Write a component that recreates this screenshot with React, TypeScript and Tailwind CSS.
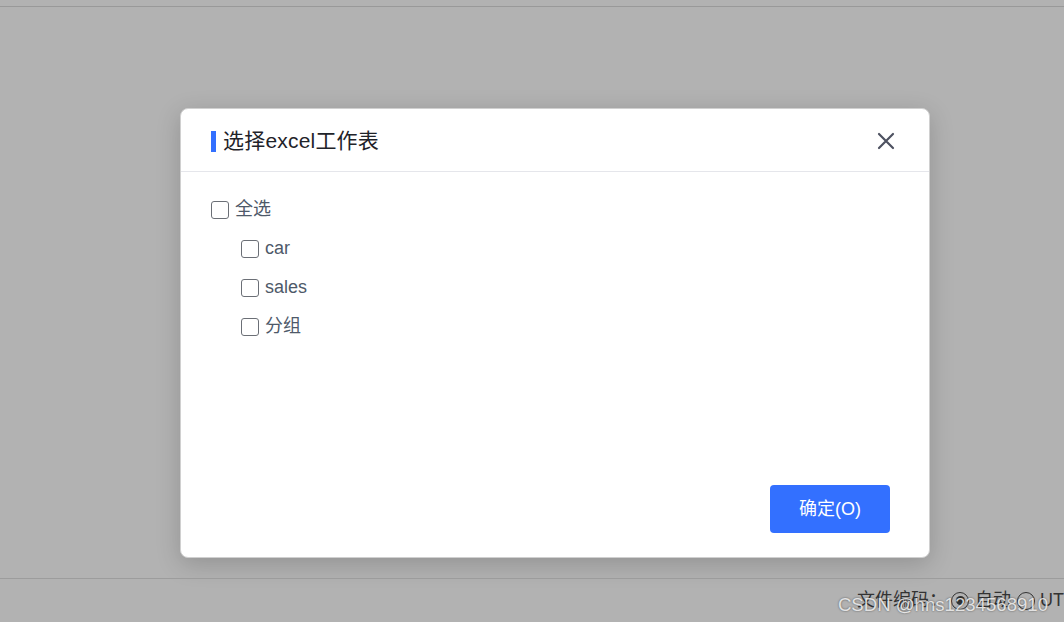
import { useState } from 'react';

const sheets = ['car', 'sales', '分组'];

function Box({ checked, onClick }: { checked: boolean; onClick: () => void }) {
  return (
    <span
      onClick={onClick}
      className={`w-[18px] h-[18px] rounded-[3px] border-[1.5px] shrink-0 flex items-center justify-center ${
        checked ? 'bg-[#3370ff] border-[#3370ff]' : 'bg-white border-[#6b6f76]'
      }`}
    >
      {checked && (
        <svg width="12" height="12" viewBox="0 0 12 12">
          <path d="M2.5 6.2l2.3 2.3 4.7-4.9" fill="none" stroke="#fff" strokeWidth="1.6" />
        </svg>
      )}
    </span>
  );
}

export default function App() {
  const [sel, setSel] = useState<string[]>([]);
  const all = sel.length === sheets.length;
  const toggle = (s: string) =>
    setSel((p) => (p.includes(s) ? p.filter((x) => x !== s) : [...p, s]));

  return (
    <div
      className="w-[1064px] h-[622px] bg-[#b2b2b2] flex flex-col overflow-hidden"
      style={{ fontFamily: '"Liberation Sans", "Noto Sans CJK SC", sans-serif' }}
    >
      <div className="h-[6px] shrink-0" />
      <div className="h-px bg-[#999] shrink-0" />
      <div className="flex-1 flex justify-center pt-[101px]">
        <div className="w-[750px] h-[450px] bg-white rounded-lg border border-[#d0d0d0] shadow-[0_6px_24px_rgba(0,0,0,0.18)] flex flex-col ml-[46px]">
          <div className="h-[63px] border-b border-[#e5e6eb] flex items-center pl-[30px] pr-[34px] pt-[2px]">
            <span className="w-[5px] h-[21px] bg-[#3370ff] mr-[7px]" />
            <span className="text-[21px] leading-[26px] tracking-[0.2px] text-[#1f2329] flex-1">选择excel工作表</span>
            <svg width="18" height="18" viewBox="0 0 18 18">
              <path d="M2 2L16 16M16 2L2 16" stroke="#4e5261" strokeWidth="2.2" strokeLinecap="round" />
            </svg>
          </div>
          <div className="flex-1 pl-[30px] pt-[18px] flex flex-col">
            <label className="flex items-center gap-[6px] h-[39px] text-[18px] text-[#4e5969]">
              <Box checked={all} onClick={() => setSel(all ? [] : [...sheets])} />
              全选
            </label>
            {sheets.map((s) => (
              <label key={s} className="flex items-center gap-[6px] h-[39px] pl-[30px] text-[18px] text-[#4e5969]">
                <Box checked={sel.includes(s)} onClick={() => toggle(s)} />
                {s}
              </label>
            ))}
          </div>
          <div className="flex justify-end pr-[39px] pb-[24px]">
            <button className="w-[120px] h-[48px] rounded bg-[#3370ff] text-white text-[18px]">确定(O)</button>
          </div>
        </div>
      </div>
      <div className="h-px bg-[#9c9c9c] shrink-0" />
      <div className="h-[43px] shrink-0 flex items-center justify-end text-[18px] text-[#333] relative">
        <span>文件编码：</span>
        <span className="w-[18px] h-[18px] rounded-full border-[1.5px] border-[#333] flex items-center justify-center ml-[4px]">
          <span className="w-[9px] h-[9px] rounded-full bg-[#333]" />
        </span>
        <span className="ml-[6px]">自动</span>
        <span className="w-[18px] h-[18px] rounded-full border-[1.5px] border-[#333] ml-[6px]" />
        <span className="w-[24px] ml-[5px] overflow-hidden whitespace-nowrap">UTF-8</span>
        <span className="absolute right-[16px] top-[14px] text-[18.6px] leading-[24px] text-white/80 [text-shadow:0_0_2px_rgba(0,0,0,0.6)]">
          CSDN @hns1234568910
        </span>
      </div>
    </div>
  );
}
